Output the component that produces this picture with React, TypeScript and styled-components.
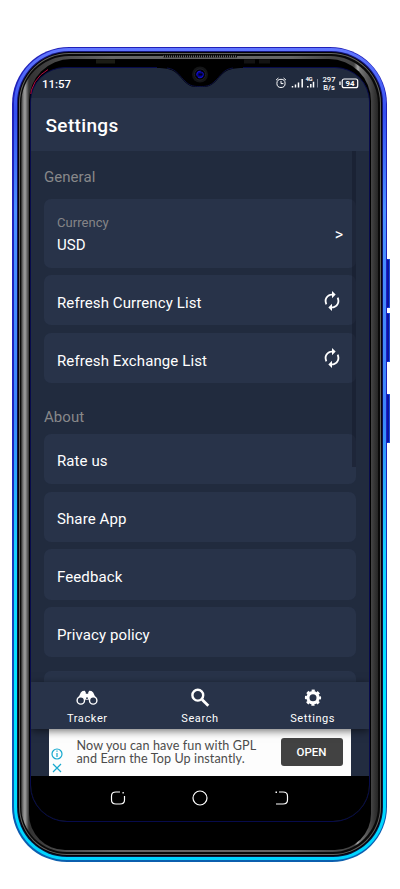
import React from "react";
import styled, { createGlobalStyle } from "styled-components";
import { MdAutorenew } from "react-icons/md";

const GlobalStyle = createGlobalStyle`
  *, *::before, *::after { box-sizing: border-box; }
  body { margin: 0; background: #fff; font-family: Roboto, "Liberation Sans", sans-serif; }
`;

const Stage = styled.main`
  width: 400px;
  height: 889px;
  padding: 46.5px 0 0 12px;
  display: flex;
  align-items: flex-start;
  overflow: hidden;
`;

const Shell = styled.div`
  width: 375px;
  height: 815px;
  flex: none;
  padding: 1.5px;
  border-radius: 57px 57px 55px 55px;
  background: linear-gradient(#2020b8, #1e22c0 50%, #1748b8 75%, #0b5fae);
`;

const Rim = styled.div`
  height: 100%;
  padding: 3px;
  border-radius: 55px 55px 53px 53px;
  background: linear-gradient(#6278ff, #3450ee 8%, #4a90ff 20%, #3c84fa 45%, #18cfff 62%, #00e4ff 80%, #00d4ff);
`;

const Trim = styled.div`
  height: 100%;
  padding: 1px;
  border-radius: 52px 52px 50px 50px;
  background: linear-gradient(#14147c, #0a0a50 50%, #061640);
`;

const Gasket = styled.div`
  height: 100%;
  padding: 1px;
  border-radius: 51px 51px 49px 49px;
  background: #050505;
`;

const Groove = styled.div`
  height: 100%;
  padding: 1px;
  border-radius: 50px 50px 48px 48px;
  background: #626262;
`;

const Ring = styled.div`
  height: 100%;
  padding: 2px 1.5px;
  border-radius: 49px 49px 47px 47px;
  background: #090909;
`;

const Chamfer = styled.div`
  height: 100%;
  padding: 2.5px 7.5px 2px;
  border-radius: 48px 48px 46px 46px;
  background: linear-gradient(90deg, #252525, #777 2px, #a0a0a0 4px, #686868 6px, #333 8px, #4c4c4c 40px, #666 90px, #666 270px, #4c4c4c 305px, #444 333px, #777 335px, #aaa 337px, #777 339px, #252525);
`;

const Face = styled.div`
  position: relative;
  height: 100%;
  padding: 8.5px 0.5px 0 1.5px;
  border-radius: 42px 42px 36px 36px;
  background: #000;
`;

const Screen = styled.div`
  width: 340px;
  height: 755px;
  border: 1px solid #070b4c;
  border-radius: 35px 35px 37px 37px;
  background: #212b3e;
  overflow: hidden;
  display: flex;
  flex-direction: column;
`;

const Hardware = styled.svg`
  position: absolute;
  left: 0;
  top: -5px;
  pointer-events: none;
`;

const SideKeys = styled.div`
  width: 3px;
  flex: none;
  padding-top: 212.5px;
  display: flex;
  flex-direction: column;
`;

const SideKey = styled.i<{ $before?: number }>`
  height: 49px;
  margin-top: ${({ $before }) => $before ?? 0}px;
  border: 1px solid #1546de;
  border-left-color: #0a0fb0;
  border-radius: 0 1px 1px 0;
  background: #11188c;
`;

const StatusBar = styled.div`
  height: 30px;
  flex: none;
  padding: 0 10.5px 0 11px;
  display: flex;
  align-items: center;
  justify-content: space-between;
  color: #fff;
`;

const Clock = styled.span`
  margin-top: 1px;
  font-size: 11.5px;
  font-weight: 500;
  letter-spacing: -0.05px;
`;

const Header = styled.header`
  height: 53px;
  flex: none;
  display: flex;
  align-items: center;
  padding: 2px 0 0 14.5px;
  background: #283349;
`;

const Title = styled.h1`
  margin: 0;
  color: #fff;
  font-size: 19px;
  font-weight: 500;
  letter-spacing: 0.35px;
`;

const Body = styled.section`
  position: relative;
  height: 531px;
  flex: none;
  padding: 0 13px;
  overflow: hidden;
`;

const GroupLabel = styled.h2<{ $height: number; $below: number }>`
  height: ${({ $height }) => $height}px;
  margin: 0;
  display: flex;
  align-items: flex-end;
  padding-bottom: ${({ $below }) => $below}px;
  line-height: 18px;
  color: #88888a;
  font-size: 15px;
  font-weight: 400;
  letter-spacing: 0.05px;
`;

const CardList = styled.div`
  display: flex;
  flex-direction: column;
  gap: 7.8px;
`;

const Card = styled.div<{ $tall?: boolean; $last?: boolean }>`
  height: ${({ $tall }) => ($tall ? 68.5 : 50.1)}px;
  flex: none;
  margin-top: ${({ $last }) => ($last ? 5.5 : 0)}px;
  padding: ${({ $tall }) => ($tall ? "2px 13px 0" : "5.5px 13px 0")};
  border-radius: 7px;
  background: #283349;
  color: #fff;
  display: flex;
  align-items: center;
  justify-content: space-between;
`;

const CardText = styled.div`
  display: flex;
  flex-direction: column;
  gap: 3px;
`;

const Hint = styled.span`
  color: #858587;
  font-size: 13px;
  line-height: 19px;
  letter-spacing: 0.05px;
`;

const Label = styled.span`
  font-size: 15px;
  line-height: 20px;
  letter-spacing: 0.1px;
`;

const Arrow = styled.span`
  margin-top: 2px;
  font-size: 16px;
  line-height: 20px;
`;

const RefreshIcon = styled(MdAutorenew)`
  width: 22px;
  height: 22px;
  margin: -5px 0.5px 0 0;
`;

const ScrollThumb = styled.div`
  position: absolute;
  top: 0;
  right: 13px;
  width: 4px;
  height: 316px;
  background: rgba(20, 25, 42, 0.5);
`;

const TabBar = styled.nav`
  position: relative;
  height: 46.5px;
  flex: none;
  display: grid;
  grid-template-columns: repeat(3, 1fr);
  background: #283349;
  box-shadow: 0 2px 8px rgba(0, 0, 0, 0.55);
`;

const Tab = styled.div`
  display: flex;
  flex-direction: column;
  align-items: center;
  padding-top: 4px;
  color: #fff;
  font-size: 11px;
  line-height: 14px;
  letter-spacing: 0.6px;

  svg { margin-bottom: 1.5px; }
`;

const AdStrip = styled.div`
  height: 47.5px;
  flex: none;
  padding: 0 18.5px 0 18px;
  background: #222c40;
`;

const Ad = styled.div`
  height: 100%;
  padding: 0 8px 0 2px;
  background: #fdfdfd;
  display: flex;
  align-items: center;
`;

const AdMarks = styled.svg`
  flex: none;
  margin-top: 17px;
`;

const AdText = styled.p`
  flex: 1;
  margin: 0 0 0 13.5px;
  color: #4c4c4c;
  font-family: Lato, "Noto Sans", sans-serif;
  font-size: 12.6px;
  line-height: 13.4px;
  letter-spacing: 0.1px;
  white-space: nowrap;
`;

const AdButton = styled.button`
  width: 62px;
  height: 28px;
  margin-bottom: 1px;
  padding: 0;
  border: 0;
  border-radius: 3px;
  background: #424242;
  color: #fff;
  font: 500 11.5px Roboto, sans-serif;
`;

const SystemNav = styled.div`
  flex: 1;
  background: #000;
  display: flex;
  justify-content: center;
  gap: 66px;
  padding-top: 14px;
`;

const DeviceHardware = () => (
  <Hardware width="342" height="40" viewBox="0 0 342 40">
    <path d="M134 2H208" stroke="#080808" strokeWidth="3" />
    <path d="M134 2.5H208" stroke="#666" strokeWidth="2" strokeDasharray="1 1" />
    <path d="M128 12.5H214V14C198 14 195 18 188 26C182 33 177 33 171 33C164 33 160 33 154 26C147 18 144 14 128 14Z" fill="#000" />
    <path d="M138 14C148 15 151 23 156 27C161 32.500 166 32.500 171 32.500S181 32.500 186 27C191 23 194 15 204 14" fill="none" stroke="#0b1040" strokeWidth="1" />
    <circle cx="171" cy="20.500" r="8" fill="#131416" />
    <circle cx="171" cy="20.500" r="5.600" fill="#030307" stroke="#202126" />
    <circle cx="171" cy="20.500" r="3.300" fill="#05058b" stroke="#1510dc" strokeDasharray="7 2" />
    <path d="M169.500 20.500h4" stroke="#000015" strokeWidth="2" />
    <path d="M67 7.500h19" stroke="#1b1c15" strokeWidth="4" />
    <path d="M215 7.500h11M230 7.500h11" stroke="#131313" strokeWidth="4" />
    <path d="M1 45A35 35 0 0 1 19 15.500" fill="none" stroke="#b40b45" strokeWidth="1" />
  </Hardware>
);

const StatusIcons = () => (
  <svg width="84" height="16" viewBox="0 0 84 16" fill="none" stroke="#fff">
    <circle cx="6" cy="8.4" r="4.1" strokeWidth="1" />
    <path d="M1 5.2 3.4 3M8.6 3 11 5.2M6 6v2.6H8.4" strokeWidth="1" />
    <path d="M17.5 12.5V11M20.5 12.5V9.5M23.5 12.5V7.5M27.2 12.5V4M32.8 12.5V11M35.8 12.5V9M38.5 12.5V6.8" strokeWidth="1.5" />
    <path d="M42.5 12.5V4" stroke="#7f8796" />
    <g fill="#fff" stroke="none" fontFamily="Roboto" fontWeight="700">
      <text x="30.5" y="5.8" fontSize="6" textLength="7">4G</text>
      <text x="47.5" y="7.2" fontSize="8" fontWeight="500" textLength="13" lengthAdjust="spacingAndGlyphs">297</text>
      <text x="48.3" y="14.7" fontSize="8" fontWeight="500" textLength="11.5" lengthAdjust="spacingAndGlyphs">B/s</text>
      <text x="70.5" y="11.1" fontSize="7.800">94</text>
    </g>
    <rect x="67.2" y="4" width="15.5" height="8.7" rx="2" strokeWidth="1.2" />
    <path d="M65 6.5v3.5" strokeWidth="1.3" />
  </svg>
);

const BinocularsIcon = () => (
  <svg width="22" height="24" viewBox="0 0 22 24">
    <path fill="#fff" d="M4.800 6.600 6.500 5 8.800 4.800 9.800 6.500v1.200h2.400V6.500l1-1.700 2.300.2 1.700 1.600 3.300 6.900H14.500l-2-.6h-3l-2 .6H1.500Z" />
    <path d="M8.500 12.200h5" stroke="#fff" strokeWidth="3" />
    <circle cx="4.800" cy="14.400" r="3.700" fill="#283349" stroke="#fff" strokeWidth="1.400" />
    <circle cx="17.200" cy="14.400" r="3.700" fill="#283349" stroke="#fff" strokeWidth="1.400" />
    <circle cx="11" cy="12.200" r="0.900" fill="#283349" />
  </svg>
);

const SearchIcon = () => (
  <svg width="22" height="24" viewBox="0 0 22 24" fill="none" stroke="#fff">
    <circle cx="8.8" cy="9.2" r="5.4" strokeWidth="2.4" />
    <path d="m13 13.5 6.300 6.300" strokeWidth="2.8" />
  </svg>
);

const GearIcon = () => (
  <svg width="22" height="24" viewBox="0 0 22 24">
    <circle cx="11" cy="11.7" r="5.1" fill="none" stroke="#fff" strokeWidth="3.200" />
    <circle cx="11" cy="11.7" r="7" fill="none" stroke="#fff" strokeWidth="2.2" strokeDasharray="3.1 2.398" strokeDashoffset="1.55" />
  </svg>
);

const tabs = [
  { name: "Tracker", Icon: BinocularsIcon },
  { name: "Search", Icon: SearchIcon },
  { name: "Settings", Icon: GearIcon },
];

const aboutItems = ["Rate us", "Share App", "Feedback", "Privacy policy"];

export default function App() {
  return (
    <>
      <GlobalStyle />
      <Stage>
        <Shell><Rim><Trim><Gasket><Groove><Ring><Chamfer>
          <Face>
            <Screen>
              <StatusBar>
                <Clock>11:57</Clock>
                <StatusIcons />
              </StatusBar>
              <Header><Title>Settings</Title></Header>
              <Body>
                <GroupLabel $height={48} $below={13}>General</GroupLabel>
                <CardList>
                  <Card $tall>
                    <CardText>
                      <Hint>Currency</Hint>
                      <Label>USD</Label>
                    </CardText>
                    <Arrow>&gt;</Arrow>
                  </Card>
                  <Card><Label>Refresh Currency List</Label><RefreshIcon /></Card>
                  <Card><Label>Refresh Exchange List</Label><RefreshIcon /></Card>
                </CardList>
                <GroupLabel $height={50.4} $below={7.5}>About</GroupLabel>
                <CardList>
                  {aboutItems.map((item) => (
                    <Card key={item}><Label>{item}</Label></Card>
                  ))}
                  <Card $last />
                </CardList>
                <ScrollThumb />
              </Body>
              <TabBar>
                {tabs.map(({ name, Icon }) => (
                  <Tab key={name}><Icon />{name}</Tab>
                ))}
              </TabBar>
              <AdStrip>
                <Ad>
                  <AdMarks width="12" height="28" viewBox="0 0 12 28" fill="none" stroke="#16a9cf" strokeWidth="1.2">
                    <circle cx="6" cy="7" r="5" />
                    <path d="M6 6v4M6 3.5v1.3M2 17l8 8M10 17l-8 8" />
                  </AdMarks>
                  <AdText>Now you can have fun with GPL<br />and Earn the Top Up instantly.</AdText>
                  <AdButton>OPEN</AdButton>
                </Ad>
              </AdStrip>
              <SystemNav>
                <svg width="16" height="16" viewBox="0 0 16 16" fill="none" stroke="#fff" strokeWidth="1.2">
                  <path d="M10 2H6Q1.5 2 1.5 6v4q0 4 4.5 4h4q4.500 0 4.500-4V6" />
                  <path d="M12.500 2.800h1.300" strokeWidth="1.500" />
                </svg>
                <svg width="16" height="16" viewBox="0 0 16 16" fill="none" stroke="#fff" strokeWidth="1.2">
                  <circle cx="8" cy="8" r="7" />
                </svg>
                <svg width="16" height="16" viewBox="0 0 16 16" fill="none" stroke="#fff" strokeWidth="1.2">
                  <path d="M5 2h4q4.500 0 4.500 4v4q0 4-4.500 4H2" />
                  <path d="M1.500 2.300h1.500" strokeWidth="1.500" />
                </svg>
              </SystemNav>
            </Screen>
            <DeviceHardware />
          </Face>
        </Chamfer></Ring></Groove></Gasket></Trim></Rim></Shell>
        <SideKeys>
          <SideKey />
          <SideKey $before={5} />
          <SideKey $before={32} />
        </SideKeys>
      </Stage>
    </>
  );
}
